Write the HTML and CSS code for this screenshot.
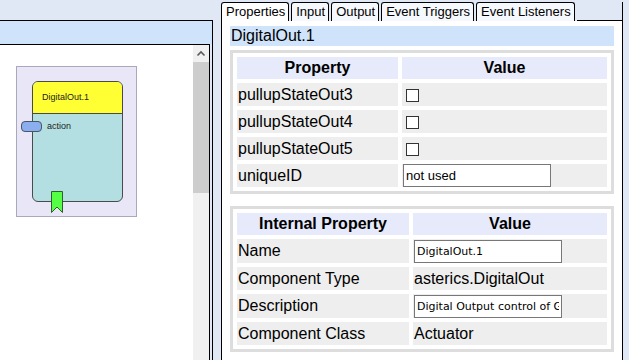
FILE: index.html
```html
<!DOCTYPE html>
<html lang="en">
<head>
  <meta charset="UTF-8">
  <meta name="viewport" content="width=device-width, initial-scale=1.0">
  <title>Model Designer</title>
  <link rel="stylesheet" href="styles.css">
</head>
<body>
  <!-- Model canvas -->
  <div class="editor">
    <div class="editor-title"></div>
    <div class="canvas-wrap">
      <div class="canvas">
        <div class="component">
          <div class="node">
            <div class="node-title">DigitalOut.1</div>
          </div>
          <div class="port"></div>
          <span class="port-label">action</span>
          <svg class="event-out" width="12" height="22" viewBox="0 0 12 22">
            <path d="M0.5 0.5 H11.5 V21.5 L6 16 L0.5 21.5 Z" fill="#55ff44" stroke="#2e5e2e" stroke-width="1"/>
          </svg>
        </div>
      </div>
      <div class="scrollbar">
        <div class="scroll-btn">
          <svg width="16" height="17" viewBox="0 0 16 17">
            <path d="M4.5 10.5 L8 7 L11.5 10.5" fill="none" stroke="#5a5a5a" stroke-width="1.6"/>
          </svg>
        </div>
        <div class="scroll-thumb"></div>
      </div>
    </div>
  </div>

  <!-- Properties panel -->
  <div class="props">
    <div class="tabs">
      <div class="tab active">Properties</div>
      <div class="tab">Input</div>
      <div class="tab">Output</div>
      <div class="tab">Event Triggers</div>
      <div class="tab">Event Listeners</div>
      <div class="tab-fill"></div>
    </div>
    <div class="tab-body">
      <div class="comp-name">DigitalOut.1</div>

      <table class="prop-table">
        <tr>
          <th class="col-prop">Property</th>
          <th>Value</th>
        </tr>
        <tr>
          <td>pullupStateOut3</td>
          <td><input type="checkbox" class="check"></td>
        </tr>
        <tr>
          <td>pullupStateOut4</td>
          <td><input type="checkbox" class="check"></td>
        </tr>
        <tr>
          <td>pullupStateOut5</td>
          <td><input type="checkbox" class="check"></td>
        </tr>
        <tr>
          <td>uniqueID</td>
          <td><input type="text" class="text-input" value="not used"></td>
        </tr>
      </table>

      <table class="prop-table internal">
        <tr>
          <th class="col-internal">Internal Property</th>
          <th>Value</th>
        </tr>
        <tr class="tall">
          <td>Name</td>
          <td><input type="text" class="text-input wide-font" value="DigitalOut.1"></td>
        </tr>
        <tr>
          <td>Component Type</td>
          <td>asterics.DigitalOut</td>
        </tr>
        <tr class="tall">
          <td>Description</td>
          <td><input type="text" class="text-input wide-font" value="Digital Output control of GPIO pins"></td>
        </tr>
        <tr>
          <td>Component Class</td>
          <td>Actuator</td>
        </tr>
      </table>
    </div>
  </div>
</body>
</html>
```

FILE: styles.css
```css
body {
  margin: 0;
  height: 360px;
  overflow: hidden;
  background-color: #dfe8f4;
  font-family: "Liberation Sans", Arial, sans-serif;
  color: #000;
  display: flex;
  align-items: flex-start;
}

/* left: model canvas */
.editor {
  width: 212px;
  margin-top: 20px;
  border-top: 1px solid #000;
  border-right: 1px solid #000;
  flex-shrink: 0;
}
.editor-title {
  height: 23px;
  background-color: #cfe3fa;
}
.canvas-wrap {
  display: flex;
  height: 315px;
  margin-right: 2px;
  border-top: 1px solid #000;
  border-right: 1px solid #000;
  background-color: #fff;
}
.canvas {
  position: relative;
  flex: 1;
}
.component {
  position: absolute;
  left: 16px;
  top: 21px;
  width: 121px;
  height: 151px;
  box-sizing: border-box;
  border: 1px solid #a9a9bb;
  background-color: #e8e6f7;
}
.node {
  position: absolute;
  left: 15px;
  top: 14px;
  width: 91px;
  height: 121px;
  box-sizing: border-box;
  border: 1px solid #4a4a4a;
  border-radius: 6px;
  background-color: #b4dfe2;
  overflow: hidden;
}
.node-title {
  height: 31px;
  line-height: 30px;
  padding-left: 9px;
  border-bottom: 1px solid #4a4a4a;
  background-color: #ffff33;
  font-size: 9px;
  color: #222;
}
.port {
  position: absolute;
  left: 4px;
  top: 54px;
  width: 21px;
  height: 11px;
  box-sizing: border-box;
  border: 1px solid #4a5566;
  border-radius: 4px;
  background-color: #8aaeee;
}
.port-label {
  position: absolute;
  left: 30px;
  top: 54px;
  font-size: 9px;
  line-height: 11px;
  color: #222;
}
.event-out {
  position: absolute;
  left: 34px;
  top: 124px;
}
.scrollbar {
  width: 16px;
  background-color: #f0f0f0;
}
.scroll-btn {
  height: 17px;
}
.scroll-btn svg {
  display: block;
}
.scroll-thumb {
  height: 131px;
  background-color: #cdcdcd;
}

/* right: properties */
.props {
  width: 402px;
  margin-left: 8px;
  flex-shrink: 0;
}
.tabs {
  display: flex;
  gap: 2px;
  padding-top: 2px;
  height: 19px;
}
.tab {
  height: 19px;
  box-sizing: border-box;
  padding: 0 3px 0 4px;
  border: 1px solid #000;
  border-bottom: none;
  border-radius: 3px 3px 0 0;
  background-color: #f5f8fc;
  font-size: 13px;
  line-height: 17px;
}
.tab.active {
  background-color: #fff;
}
.tab-fill {
  flex: 1;
  border-bottom: 1px solid #000;
  border-right: 1px solid #000;
}
.tab-body {
  height: 334px;
  padding: 5px 8px 0 8px;
  border-left: 1px solid #000;
  border-right: 1px solid #000;
  background-color: #fff;
}
.comp-name {
  height: 20px;
  line-height: 20px;
  padding-left: 1px;
  margin-bottom: 4px;
  background-color: #cfe3fb;
  font-size: 16px;
}
.prop-table {
  width: 100%;
  border: 3px solid #ddd;
  border-spacing: 4px;
  font-size: 16px;
}
.prop-table.internal {
  margin-top: 12px;
}
.prop-table th {
  height: 22px;
  padding: 0;
  background-color: #e6eafa;
  font-weight: bold;
  text-align: center;
}
.col-prop {
  width: 161px;
}
.col-internal {
  width: 172px;
}
.prop-table td {
  height: 23px;
  padding: 0 1px;
  background-color: #eee;
  line-height: 18px;
}
.prop-table tr.tall td {
  height: 24px;
}
.check {
  appearance: none;
  width: 13px;
  height: 13px;
  margin: 0 0 0 3px;
  border: 1px solid #333;
  border-radius: 0;
  background-color: #fff;
  vertical-align: middle;
}
.text-input {
  width: 148px;
  height: 23px;
  box-sizing: border-box;
  margin: 0;
  padding: 0 2px;
  border: 1px solid #777;
  font-family: "Liberation Sans", Arial, sans-serif;
  font-size: 13px;
  vertical-align: middle;
  outline: none;
}
.text-input.wide-font {
  font-family: "DejaVu Sans", Verdana, sans-serif;
  font-size: 11px;
}
```
